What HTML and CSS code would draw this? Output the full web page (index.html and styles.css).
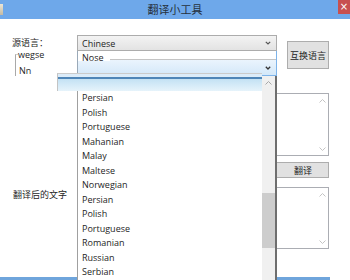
FILE: index.html
```html
<!DOCTYPE html>
<html>
<head>
<meta charset="utf-8">
<link rel="stylesheet" href="styles.css">
</head>
<body>
<div class="window">
  <div class="titlebar">
    <div class="tb-icon"><span class="app-icon"></span></div>
    <div class="tb-title">翻译小工具</div>
    <div class="tb-close">×</div>
  </div>
  <div class="content">
    <div class="lbl lbl-src">源语言：</div>
    <div class="combo combo1"><span>Chinese</span><svg class="chev" width="6" height="4" viewBox="0 0 6 4"><polyline points="0.8,0.8 3,3 5.2,0.8" fill="none" stroke="#555" stroke-width="1.2"/></svg></div>
    <button class="btn btn-swap">互换语言</button>
    <div class="mini"><span class="mini-a">wegse</span><span class="mini-b">Nn</span></div>
    <div class="combo2">
      <span class="nose">Nose</span>
      <div class="combo2-body"><svg class="chev" width="6" height="4" viewBox="0 0 6 4"><polyline points="0.8,0.8 3,3 5.2,0.8" fill="none" stroke="#333" stroke-width="1.3"/></svg></div>
    </div>
    <div class="textarea ta1">
      <div class="vscroll">
        <svg width="7" height="4" viewBox="0 0 7 4"><polyline points="0.5,3.5 3.5,0.5 6.5,3.5" fill="none" stroke="#c4c4c4" stroke-width="1"/></svg>
        <svg width="7" height="4" viewBox="0 0 7 4"><polyline points="0.5,0.5 3.5,3.5 6.5,0.5" fill="none" stroke="#c4c4c4" stroke-width="1"/></svg>
      </div>
    </div>
    <button class="btn btn-tr">翻译</button>
    <div class="lbl lbl-out">翻译后的文字</div>
    <div class="textarea ta2">
      <div class="vscroll">
        <svg width="7" height="4" viewBox="0 0 7 4"><polyline points="0.5,3.5 3.5,0.5 6.5,3.5" fill="none" stroke="#c4c4c4" stroke-width="1"/></svg>
        <svg width="7" height="4" viewBox="0 0 7 4"><polyline points="0.5,0.5 3.5,3.5 6.5,0.5" fill="none" stroke="#c4c4c4" stroke-width="1"/></svg>
      </div>
    </div>
  </div>
  <div class="bottom-strip"></div>
  <div class="dropdown">
    <ul class="dd-list">
      <li>Persian</li>
      <li>Polish</li>
      <li>Portuguese</li>
      <li>Mahanian</li>
      <li>Malay</li>
      <li>Maltese</li>
      <li>Norwegian</li>
      <li>Persian</li>
      <li>Polish</li>
      <li>Portuguese</li>
      <li>Romanian</li>
      <li>Russian</li>
      <li>Serbian</li>
    </ul>
    <div class="dd-scroll">
      <svg class="dd-up" width="7" height="4" viewBox="0 0 7 4"><polyline points="0.5,3.5 3.5,0.5 6.5,3.5" fill="none" stroke="#a8a8a8" stroke-width="1"/></svg>
      <div class="dd-thumb"></div>
    </div>
  </div>
  <div class="highlight"></div>
</div>
</body>
</html>
```
FILE: styles.css
```css
* { box-sizing: border-box; }
body { margin: 0; background: #fff; }
.window {
  width: 350px;
  height: 280px;
  position: relative;
  overflow: hidden;
  background: #fff;
  display: flex;
  flex-direction: column;
  font-family: "Open Sans", "Noto Sans CJK SC", sans-serif;
  color: #1e1e1e;
}
.titlebar {
  height: 19px;
  flex-shrink: 0;
  background: #6ea8ea;
  display: grid;
  grid-template-columns: 12px 1fr 12px;
}
.tb-icon { display: flex; align-items: center; }
.app-icon { width: 3px; height: 11px; background: linear-gradient(#ece6d6, #c3baa3); }
.tb-title {
  text-align: center;
  font-family: "Noto Sans CJK SC", sans-serif;
  font-size: 11px;
  line-height: 19px;
  color: #26313d;
}
.tb-close {
  height: 14px;
  background: #c75050;
  color: #fff;
  font-size: 10px;
  line-height: 14px;
  text-align: center;
  font-family: "DejaVu Sans", sans-serif;
}
.content {
  display: grid;
  grid-template-columns: 65px 200px 10px 42px;
  grid-template-rows: 16px 25px 17px 63px 6px 16px 9px 62px;
  padding: 16px 0 0 12px;
}
.lbl {
  font-family: "Noto Sans CJK SC", sans-serif;
  font-size: 9px;
  line-height: 14px;
  color: #1e1e1e;
}
.lbl-src { grid-column: 1; grid-row: 1; align-self: center; }
.lbl-out { grid-column: 1; grid-row: 8; align-self: start; margin: 1px 0 0 1px; }
.combo {
  display: flex;
  align-items: center;
  justify-content: space-between;
  font-size: 9px;
}
.combo1 {
  grid-column: 2;
  grid-row: 1;
  border: 1px solid #acacac;
  background: linear-gradient(#f3f3f3, #e3e3e3);
  padding: 0 5px 0 4px;
}
.combo2 {
  grid-column: 2;
  grid-row: 2;
  display: grid;
  grid-template-rows: 9px 1fr;
  border-left: 1px solid #9aa9b8;
  border-right: 1px solid #7eb4ea;
  border-bottom: 1px solid #7eb4ea;
  background: linear-gradient(#fff 0 8px, #c4c4c4 8px 9px, #eaf4fd 9px, #d4e8f9 100%);
}
.nose {
  justify-self: start;
  font-size: 9px;
  line-height: 10px;
  height: 10px;
  padding: 2px 6px 0 4px;
  white-space: nowrap;
  background: #fff;
}
.combo2-body {
  display: flex;
  align-items: center;
  justify-content: flex-end;
  padding-right: 5px;
}
.btn {
  font-family: "Noto Sans CJK SC", sans-serif;
  font-size: 9px;
  color: #1e1e1e;
  background: #e1e1e1;
  border: 1px solid #adadad;
  padding: 0;
  margin: 0;
}
.btn-swap {
  grid-column: 4;
  grid-row: 1 / span 2;
  align-self: start;
  margin-top: 6px;
  height: 28px;
}
.btn-tr {
  grid-column: 2 / span 3;
  grid-row: 6;
  justify-self: end;
  width: 53px;
  padding-left: 1px;
}
.mini {
  grid-column: 1;
  grid-row: 2 / span 2;
  align-self: start;
  margin: 3px 0 0 3px;
  width: 36px;
  height: 22px;
  border-top: 1px solid #cfcfcf;
  border-left: 1px solid #a9a9a9;
  display: flex;
  flex-direction: column;
  align-items: flex-start;
  font-size: 9px;
}
.mini-a { line-height: 10px; margin: -5px 0 0 2px; padding-right: 8px; background: #fff; }
.mini-b { line-height: 12px; margin-top: 5px; padding-left: 3px; }
.textarea {
  grid-column: 2 / span 3;
  border: 1px solid #abadb3;
  display: flex;
  justify-content: flex-end;
  background: #fff;
}
.ta1 { grid-row: 4; }
.ta2 { grid-row: 8; }
.vscroll {
  width: 11px;
  display: flex;
  flex-direction: column;
  justify-content: space-between;
  align-items: center;
  padding: 5px 0 4px;
}
.bottom-strip {
  margin-top: auto;
  height: 3px;
  width: 330px;
  flex-shrink: 0;
  background: #6fa5dc;
}
.dropdown {
  position: absolute;
  left: 77px;
  top: 76px;
  width: 200px;
  height: 204px;
  display: flex;
  background: #fff;
  border-left: 1px solid #a0a0a0;
  border-right: 2px solid #6e6e6e;
}
.dd-list {
  flex: 1;
  list-style: none;
  margin: 0;
  padding: 15px 0 0 4px;
  font-size: 9px;
  line-height: 14.5px;
  color: #1e1e1e;
}
.dd-scroll {
  width: 13px;
  background: #f0f0f0;
  display: flex;
  flex-direction: column;
  align-items: center;
}
.dd-up { margin-top: 5px; flex-shrink: 0; }
.dd-thumb {
  width: 100%;
  height: 55px;
  margin-top: 108px;
  background: #cdcdcd;
}
.highlight {
  position: absolute;
  left: 57px;
  top: 73px;
  width: 205px;
  height: 18px;
  border-top: 1px solid #cbcbcb;
  border-left: 1px solid #c4c4c4;
  background: linear-gradient(#dcecf9 0 3px, #4f86b8 3px 5px, #c3e1f4 5px, #e6f3fb 100%);
}
```
